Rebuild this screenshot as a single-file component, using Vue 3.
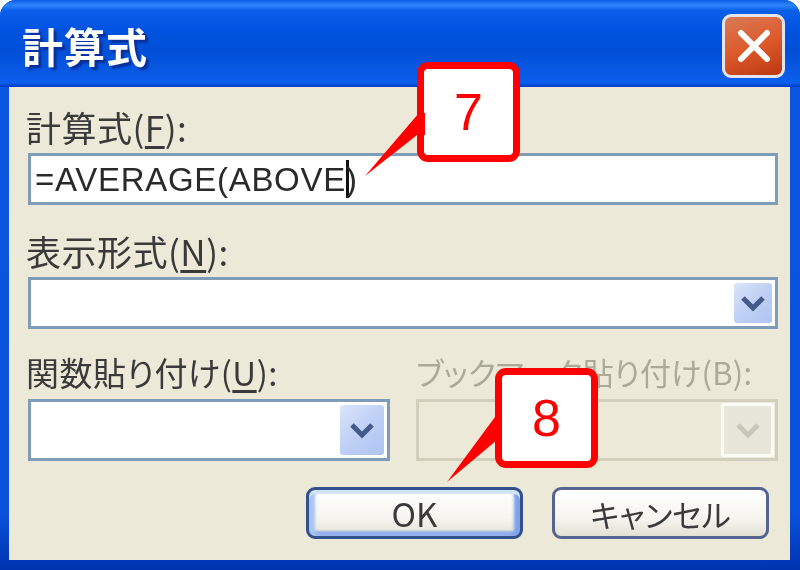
<template>
  <div class="window">
    <!-- Title bar -->
    <div class="titlebar">
      <span class="title">計算式</span>
      <button class="close">
        <svg width="44" height="44" viewBox="0 0 44 44">
          <path d="M9 9 L35 35 M35 9 L9 35" stroke="#fff" stroke-width="6" stroke-linecap="round" fill="none" />
        </svg>
      </button>
    </div>

    <div class="body">
      <div class="label">計算式(<u>F</u>):</div>
      <div class="field formula">
        <span>=AVERAGE(ABOVE<i class="caret"></i>)</span>
      </div>

      <div class="label second">表示形式(<u>N</u>):</div>
      <div class="field combo">
        <span class="drop small"><svg width="26" height="18" viewBox="0 0 26 18"><path d="M3 4 L13 14 L23 4" /></svg></span>
      </div>

      <div class="pair">
        <div class="col">
          <div class="label kana">関数貼り付け(<u>U</u>):</div>
          <div class="field combo tall">
            <span class="drop"><svg width="26" height="18" viewBox="0 0 26 18"><path d="M3 4 L13 14 L23 4" /></svg></span>
          </div>
        </div>
        <div class="col">
          <div class="label kana disabled">ブックマーク貼り付け(B):</div>
          <div class="field combo tall off">
            <span class="drop"><svg width="26" height="18" viewBox="0 0 26 18"><path d="M3 4 L13 14 L23 4" /></svg></span>
          </div>
        </div>
      </div>

      <div class="buttons">
        <button class="btn default">OK</button>
        <button class="btn cancel">キャンセル</button>
      </div>
    </div>

    <!-- Annotation callouts over the dialog -->
    <div class="callout one">
      <svg class="tail" width="70" height="80" viewBox="0 0 70 80"><path d="M0 64 L54 1 L60 1 L60 23 L52 23 Z" /></svg>
      <span>7</span>
    </div>
    <div class="callout two">
      <svg class="tail" width="70" height="80" viewBox="0 0 70 80"><path d="M1 66 L49 1 L56 1 L56 24 L51 24 Z" /></svg>
      <span>8</span>
    </div>
  </div>
</template>

<script setup>
</script>

<style scoped>
.window {
  position: relative;
  width: 800px;
  height: 570px;
  box-sizing: border-box;
  display: flex;
  flex-direction: column;
  background: linear-gradient(180deg, #0a55e0 0%, #0a52dc 90%, #0033b0 100%);
  border-radius: 16px 16px 0 0;
  overflow: hidden;
  font-family: "Noto Sans CJK JP", "Liberation Sans", sans-serif;
  color: #3a3a3a;
}

.titlebar {
  height: 87px;
  flex: none;
  box-sizing: border-box;
  display: flex;
  align-items: center;
  justify-content: space-between;
  padding: 4px 15px 0 22px;
  background: linear-gradient(180deg, #0a5ce8 0%, #2f86fb 6%, #0a5fea 12%, #0053e0 35%, #004fd6 60%, #0a5ae6 85%, #0a60ee 95%, #0038c0 100%);
}

.title {
  font-size: 41px;
  font-weight: 700;
  letter-spacing: 1px;
  line-height: 1;
  color: #fff;
  text-shadow: 3px 3px 2px #0a2f9a;
  filter: blur(0.5px);
}

.close {
  width: 63px;
  height: 64px;
  padding: 0;
  border: 3px solid #e4e4ee;
  border-radius: 9px;
  display: flex;
  align-items: center;
  justify-content: center;
  background: linear-gradient(160deg, #d97a58 0%, #dd5a2c 50%, #bb3810 100%);
  filter: blur(0.4px);
}

.body {
  flex: none;
  height: 473px;
  margin: 0 10px 0 9px;
  box-sizing: border-box;
  padding: 18px 12px 0 19px;
  background: #ece9d8;
}

.label {
  height: 48px;
  margin-left: -2px;
  font-size: 35px;
  line-height: 44px;
  letter-spacing: 0.5px;
  white-space: nowrap;
  filter: blur(0.6px);
}

.label.second {
  margin-top: 24px;
}

.label.kana {
  font-size: 33px;
  line-height: 42px;
  font-feature-settings: "palt";
  letter-spacing: 0.5px;
}

.label.disabled {
  margin-left: 0;
  font-size: 31px;
  letter-spacing: 0.2px;
  color: #aba998;
}

.label u {
  text-underline-offset: 4px;
}

.field {
  height: 52px;
  box-sizing: border-box;
  border: 3px solid #7f9db9;
  background: #fff;
}

.formula {
  display: flex;
  align-items: center;
  padding-left: 4px;
  font-family: "Liberation Sans", sans-serif;
  font-size: 33px;
  letter-spacing: 0.7px;
  color: #2a2a2a;
  filter: blur(0.5px);
}

.caret {
  display: inline-block;
  width: 3px;
  height: 38px;
  margin-right: -3px;
  vertical-align: -7px;
  background: #111;
}

.combo {
  display: flex;
  justify-content: flex-end;
  align-items: stretch;
  padding: 3px;
}

.combo.tall {
  height: 62px;
}

.drop {
  width: 44px;
  display: flex;
  align-items: center;
  justify-content: center;
  border-radius: 3px;
  background: linear-gradient(135deg, #dbe5fa 0%, #bfd0f5 50%, #aec4f2 100%);
  filter: blur(0.4px);
}

.drop.small {
  width: 38px;
}

.drop path {
  fill: none;
  stroke: #445a88;
  stroke-width: 5;
}

.off {
  padding: 1px;
  background: #ece9d8;
  border-color: #d2cfbd;
}

.off .drop {
  width: 47px;
  background: #e8e6da;
  border: 3px solid #fbfbf8;
}

.off .drop path {
  stroke: #c9c7ba;
}

.pair {
  display: grid;
  grid-template-columns: 362px 362px;
  column-gap: 26px;
  margin-top: 22px;
}

.buttons {
  display: flex;
  justify-content: flex-end;
  gap: 29px;
  margin-top: 26px;
  padding-right: 9px;
}

.btn {
  width: 217px;
  height: 52px;
  padding: 0;
  border: 3px solid #34508c;
  border-radius: 9px;
  background: linear-gradient(180deg, #ffffff 0%, #f6f5ef 60%, #e4e1d4 100%);
  font-family: "Noto Sans CJK JP", "Liberation Sans", sans-serif;
  font-size: 33px;
  font-feature-settings: "palt";
  line-height: 1;
  color: #3a3a3a;
  filter: blur(0.5px);
}

.btn.cancel {
  border-color: #56658f;
  font-size: 31px;
}

.btn.default {
  box-shadow: inset 0 4px 0 #cfe3fb, inset 6px 0 3px #a8c4f0, inset -6px 0 3px #7ea2e8, inset 0 -5px 2px #93b0ea;
}

.callout {
  position: absolute;
  width: 103px;
  height: 100px;
  box-sizing: border-box;
  display: flex;
  align-items: center;
  justify-content: center;
  border: 7px solid #ff0000;
  border-radius: 11px;
  background: #fff;
  color: #ff0000;
  font-family: "Liberation Sans", sans-serif;
  font-size: 52px;
  line-height: 1;
}

.callout.one {
  left: 417px;
  top: 62px;
}

.callout.two {
  left: 495px;
  top: 368px;
}

.tail {
  position: absolute;
  fill: #ff0000;
}

.one .tail {
  left: -59px;
  top: 43px;
}

.two .tail {
  left: -56px;
  top: 41px;
}
</style>

<style>
html,
body {
  background: #fff;
}
</style>
